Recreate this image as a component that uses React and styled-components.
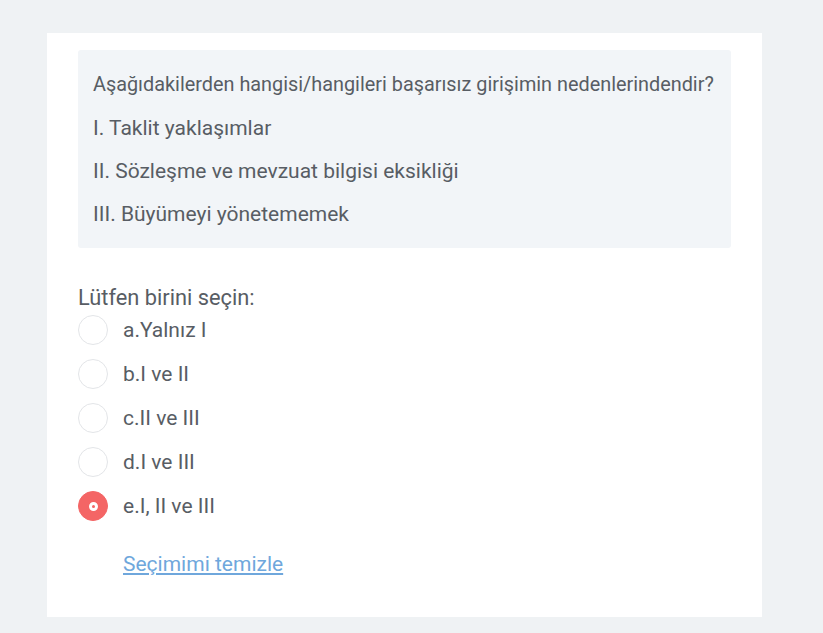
import React, { useState } from "react";
import styled, { createGlobalStyle } from "styled-components";

const Global = createGlobalStyle`
    body{
        margin: 0;
        background: #eff2f4;
        font-family: Roboto, "Noto Sans", sans-serif;
        color: #585d64;
    }
`

const options = ["a.Yalnız I", "b.I ve II", "c.II ve III", "d.I ve III", "e.I, II ve III"];

export default function App() {
    const [selected, setSelected] = useState(4);

    return (
        <>
            <Global />
            <Page>
                <Card>
                    <Question>
                        <Line $lead>Aşağıdakilerden hangisi/hangileri başarısız girişimin nedenlerindendir?</Line>
                        <Line>I. Taklit yaklaşımlar</Line>
                        <Line>II. Sözleşme ve mevzuat bilgisi eksikliği</Line>
                        <Line>III. Büyümeyi yönetememek</Line>
                    </Question>
                    <Prompt>Lütfen birini seçin:</Prompt>
                    <Options>
                        {options.map((o, i) => (
                            <Option key={o} onClick={() => setSelected(i)}>
                                <Radio $checked={selected === i} />
                                <span>{o}</span>
                            </Option>
                        ))}
                    </Options>
                    <Clear href="#" onClick={(e) => { e.preventDefault(); setSelected(null); }}>
                        Seçimimi temizle
                    </Clear>
                </Card>
            </Page>
        </>
    )
}

const Page = styled.div`
    padding: 33px 0 0 47px;
`
const Card = styled.div`
    width: 715px;
    box-sizing: border-box;
    background: #FFFFFF;
    padding: 17px 31px 40px;
    display: flex;
    flex-direction: column;
    align-items: flex-start;
`
const Question = styled.div`
    align-self: stretch;
    background: #f2f5f8;
    border-radius: 3px;
    padding: 22px 15px 21px;
`
const Line = styled.p`
    margin: 0 0 17px;
    font-size: ${p => p.$lead ? "19.85px" : "21px"};
    line-height: 26px;
    white-space: nowrap;
    &:last-child{
        margin-bottom: 0;
    }
`
const Prompt = styled.div`
    margin-top: 40px;
    font-size: 21.8px;
    line-height: 20px;
`
const Options = styled.div`
    display: flex;
    flex-direction: column;
`
const Option = styled.label`
    display: flex;
    align-items: center;
    gap: 15px;
    height: 44px;
    font-size: 21px;
    cursor: pointer;
`
const Radio = styled.span`
    width: 30px;
    height: 30px;
    box-sizing: border-box;
    border-radius: 50%;
    border: 1px solid ${p => p.$checked ? "#f46565" : "#e3e5e8"};
    background: ${p => p.$checked ? "#f46565" : "#FFFFFF"};
    display: flex;
    align-items: center;
    justify-content: center;
    &::after{
        content: "";
        display: ${p => p.$checked ? "block" : "none"};
        width: 3px;
        height: 3px;
        border-radius: 50%;
        background: #f46565;
        border: 3px solid #FFFFFF;
    }
`
const Clear = styled.a`
    margin: 23px 0 0 45px;
    font-size: 21px;
    line-height: 26px;
    color: #6fa7dc;
    text-decoration: underline;
`
